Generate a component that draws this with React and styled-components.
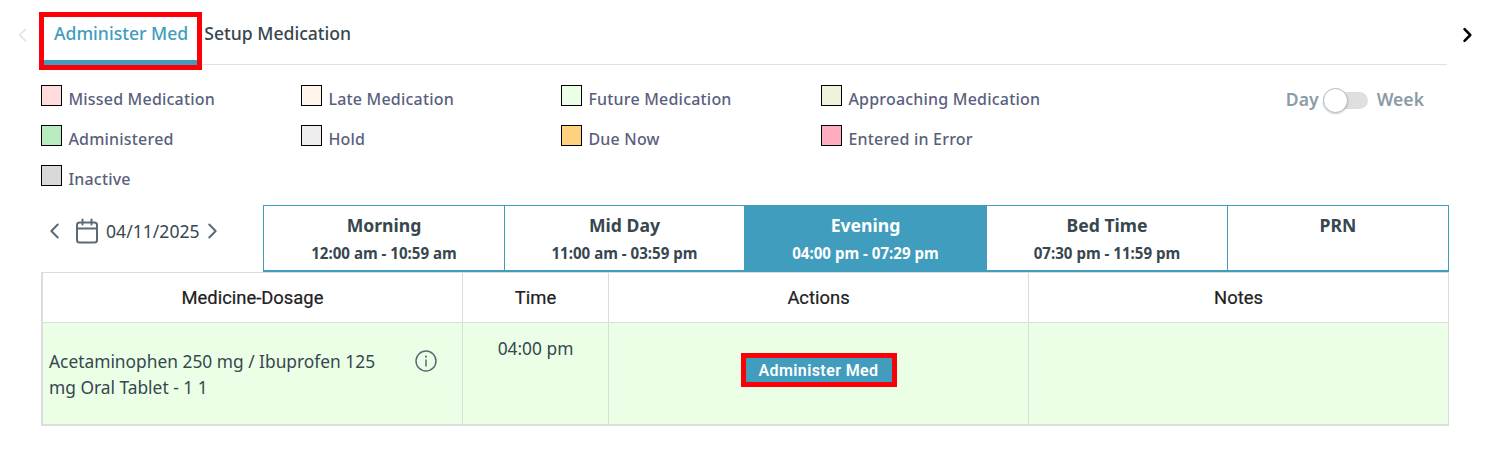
import React from "react";
import styled, { createGlobalStyle } from "styled-components";

const Global = createGlobalStyle`
  html, body { margin: 0; padding: 0; background: #fff; }
  body { font-family: "Noto Sans", "Open Sans", "Liberation Sans", sans-serif; }
`;

const Page = styled.div`
  width: 1500px;
  height: 453px;
  overflow: hidden;
  padding-top: 17px;
  box-sizing: border-box;
`;
const TabRow = styled.div`
  display: flex;
  height: 48px;
`;
const ScrollArrow = styled.div`
  flex: none;
  width: ${p => p.$w}px;
  display: flex;
  align-items: flex-start;
  padding: 8px 0 0 ${p => p.$pl}px;
  box-sizing: border-box;
`;
const TabStrip = styled.div`
  flex: 1;
  display: flex;
  border-bottom: 1px solid #dee2e6;
`;
const Tab = styled.div`
  height: 48px;
  box-sizing: border-box;
  flex: none;
  font-size: 17.6px;
  font-weight: 500;
  line-height: 32px;
  color: ${p => (p.$active ? "#409dbd" : "#37474f")};
  padding: 0 ${p => (p.$active ? "9px" : "0")} 0 ${p => (p.$active ? "10px" : "0")};
  margin-right: ${p => (p.$active ? "7px" : "0")};
  border-bottom: ${p => (p.$active ? "5px solid #409dbd" : "0")};
  outline: ${p => (p.$active ? "5px solid #fb0007" : "0")};
`;
const Body = styled.div`
  padding: 20px 51px 0 41px;
`;
const LegendWrap = styled.div`
  display: flex;
  justify-content: space-between;
  height: 120px;
`;
const Legend = styled.div`
  display: grid;
  grid-template-columns: repeat(4, 260px);
  grid-auto-rows: 40px;
`;
const LegendItem = styled.div`
  display: flex;
  align-items: flex-start;
  gap: 6.4px;
  font-size: 16px;
  font-weight: 500;
  letter-spacing: .2px;
  color: #5a5f7d;
  line-height: 28px;
`;
const Swatch = styled.span`
  flex: none;
  width: 21px;
  height: 21px;
  box-sizing: border-box;
  border: 1px solid #000;
  background: ${p => p.$c};
`;
const ToggleWrap = styled.div`
  display: flex;
  align-items: flex-start;
  font-size: 17.6px;
  font-weight: 600;
  color: #8a9ba8;
  line-height: 28px;
  margin-right: 25px;
  height: 30px;
`;
const Track = styled.div`
  position: relative;
  width: 45px;
  height: 17px;
  margin: 7px 9px 0 4px;
  border-radius: 9px;
  background: #dfdfdf;
`;
const Knob = styled.div`
  position: absolute;
  left: 0;
  top: -4px;
  width: 25px;
  height: 25px;
  box-sizing: border-box;
  border-radius: 50%;
  background: #fff;
  border: 1px solid #b4bcc3;
  box-shadow: 0 1px 2px rgba(0,0,0,.2);
`;
const ShiftRow = styled.div`
  display: flex;
  height: 67px;
`;
const DatePicker = styled.div`
  flex: none;
  width: 222px;
  display: flex;
  align-items: center;
  height: 52px;
  padding-left: 3px;
  box-sizing: border-box;
  font-size: 17.6px;
  color: #37474f;
`;
const CalendarIcon = styled.svg`
  flex: none;
  margin-left: 9px;
`;
const DateText = styled.span`
  margin: 0 1px 0 7px;
  line-height: 24px;
`;
const Shifts = styled.div`
  flex: 1;
  display: grid;
  grid-template-columns: 241px 239px 243px 241px 220px;
  border: 1px solid #409dbd;
  border-bottom-width: 2px;
  box-sizing: border-box;
`;
const Shift = styled.div`
  text-align: center;
  background: ${p => (p.$active ? "#409dbd" : "#fff")};
  color: ${p => (p.$active ? "#fff" : "#37474f")};
  border-right: ${p => (p.$last || p.$active || p.$noSep ? "0" : "1px solid #409dbd")};
  padding-top: 7px;
  box-sizing: border-box;
`;
const ShiftName = styled.div`
  font-size: 17.6px;
  font-weight: 700;
  line-height: 24px;
`;
const ShiftTime = styled.div`
  font-size: 15.1px;
  font-weight: 700;
  line-height: 20px;
  margin-top: 6px;
`;
const Table = styled.div`
  display: grid;
  grid-template-columns: 420px 146px 420px 419px;
  grid-template-rows: 50px 101px;
  width: 1408px;
  box-sizing: border-box;
  border: 1px solid #dcdcdc;
  border-left-width: 2px;
  border-bottom: 2px solid #d8e0d8;
`;
const Head = styled.div`
  font-family: Roboto, "Liberation Sans", sans-serif;
  font-size: 18.4px;
  font-weight: 400;
  color: #212121;
  -webkit-text-stroke: 0.2px #212121;
  text-align: center;
  line-height: 49px;
  border-right: ${p => (p.$last ? "0" : "1px solid #dcdcdc")};
  border-bottom: 1px solid #dcdcdc;
`;
const Cell = styled.div`
  background: #eaffe6;
  border-right: ${p => (p.$last ? "0" : "1px solid #d3e2d1")};
  color: #37474f;
  font-size: 17.35px;
`;
const MedCell = styled(Cell)`
  display: flex;
  align-items: flex-start;
  justify-content: space-between;
  padding: 25px 25px 0 6px;
  line-height: 26px;
`;
const MedName = styled.div`
  width: 340px;
`;
const InfoIcon = styled.span`
  display: block;
  margin-top: 2px;
  color: #5b6b75;
  height: 22px;
`;
const TimeCell = styled(Cell)`
  text-align: center;
  padding-top: 12px;
  line-height: 26px;
`;
const ActionCell = styled(Cell)`
  display: flex;
  justify-content: center;
  padding-top: 35px;
`;
const ActionButton = styled.button`
  display: block;
  width: 146px;
  height: 24px;
  padding: 0;
  border: 0;
  background: #409dbd;
  color: #fff;
  font-family: Roboto, "Liberation Sans", sans-serif;
  font-size: 16px;
  font-weight: 600;
  letter-spacing: .4px;
  outline: 5px solid #fb0007;
`;

const legend = [
  ["Missed Medication", "#ffdcdc"],
  ["Late Medication", "#fff5eb"],
  ["Future Medication", "#eaffe6"],
  ["Approaching Medication", "#eef3dc"],
  ["Administered", "#b9ebc0"],
  ["Hold", "#eeeeee"],
  ["Due Now", "#ffd080"],
  ["Entered in Error", "#ffabc0"],
  ["Inactive", "#d9d9d9"],
];

const shifts = [
  ["Morning", "12:00 am - 10:59 am"],
  ["Mid Day", "11:00 am - 03:59 pm", false, true],
  ["Evening", "04:00 pm - 07:29 pm", true],
  ["Bed Time", "07:30 pm - 11:59 pm"],
  ["PRN", ""],
];

const Chevron = ({ dir, color, size = 20, sw = 2 }) => (
  <svg width={size} height={size} viewBox="0 0 24 24" fill="none" stroke={color} strokeWidth={sw} strokeLinecap="round" strokeLinejoin="round">
    <path d={dir === "left" ? "M15 5l-7 7 7 7" : "M9 5l7 7-7 7"} />
  </svg>
);

export default function App() {
  return (
    <Page>
      <Global />
      <TabRow>
        <ScrollArrow $w={44} $pl={13}>
          <Chevron dir="left" color="#e6e8ea" sw={2.5} />
        </ScrollArrow>
        <TabStrip>
          <Tab $active>Administer Med</Tab>
          <Tab>Setup Medication</Tab>
        </TabStrip>
        <ScrollArrow $w={53} $pl={10}>
          <Chevron dir="right" color="#000" sw={3} />
        </ScrollArrow>
      </TabRow>
      <Body>
        <LegendWrap>
          <Legend>
            {legend.map(([label, c]) => (
              <LegendItem key={label}>
                <Swatch $c={c} />
                {label}
              </LegendItem>
            ))}
          </Legend>
          <ToggleWrap>
            Day
            <Track><Knob /></Track>
            Week
          </ToggleWrap>
        </LegendWrap>
        <ShiftRow>
          <DatePicker>
            <Chevron dir="left" color="#5b6b75" size={22} sw={2.2} />
            <CalendarIcon width="24" height="26" viewBox="0 0 24 26" fill="none" stroke="#5b6b75" strokeWidth="2" strokeLinecap="round" strokeLinejoin="round">
              <rect x="2" y="4.5" width="20" height="20" rx="2.5" />
              <path d="M7.5 1.5v5M16.5 1.5v5M2 10.5h20" />
            </CalendarIcon>
            <DateText>04/11/2025</DateText>
            <Chevron dir="right" color="#5b6b75" size={22} sw={2.2} />
          </DatePicker>
          <Shifts>
            {shifts.map(([name, time, active, noSep], i) => (
              <Shift key={name} $active={active} $noSep={noSep} $last={i === 4}>
                <ShiftName>{name}</ShiftName>
                <ShiftTime>{time}</ShiftTime>
              </Shift>
            ))}
          </Shifts>
        </ShiftRow>
        <Table>
          <Head>Medicine-Dosage</Head>
          <Head>Time</Head>
          <Head>Actions</Head>
          <Head $last>Notes</Head>
          <MedCell>
            <MedName>Acetaminophen 250 mg / Ibuprofen 125 mg Oral Tablet - 1 1</MedName>
            <InfoIcon>
              <svg width="22" height="22" viewBox="0 0 22 22" fill="none" stroke="currentColor" strokeWidth="1.5" strokeLinecap="round">
                <circle cx="11" cy="11" r="10" />
                <path d="M11 10v6" />
                <path d="M11 6.5v.3" strokeWidth="2" />
              </svg>
            </InfoIcon>
          </MedCell>
          <TimeCell>04:00 pm</TimeCell>
          <ActionCell>
            <div><ActionButton>Administer Med</ActionButton></div>
          </ActionCell>
          <Cell $last />
        </Table>
      </Body>
    </Page>
  );
}
